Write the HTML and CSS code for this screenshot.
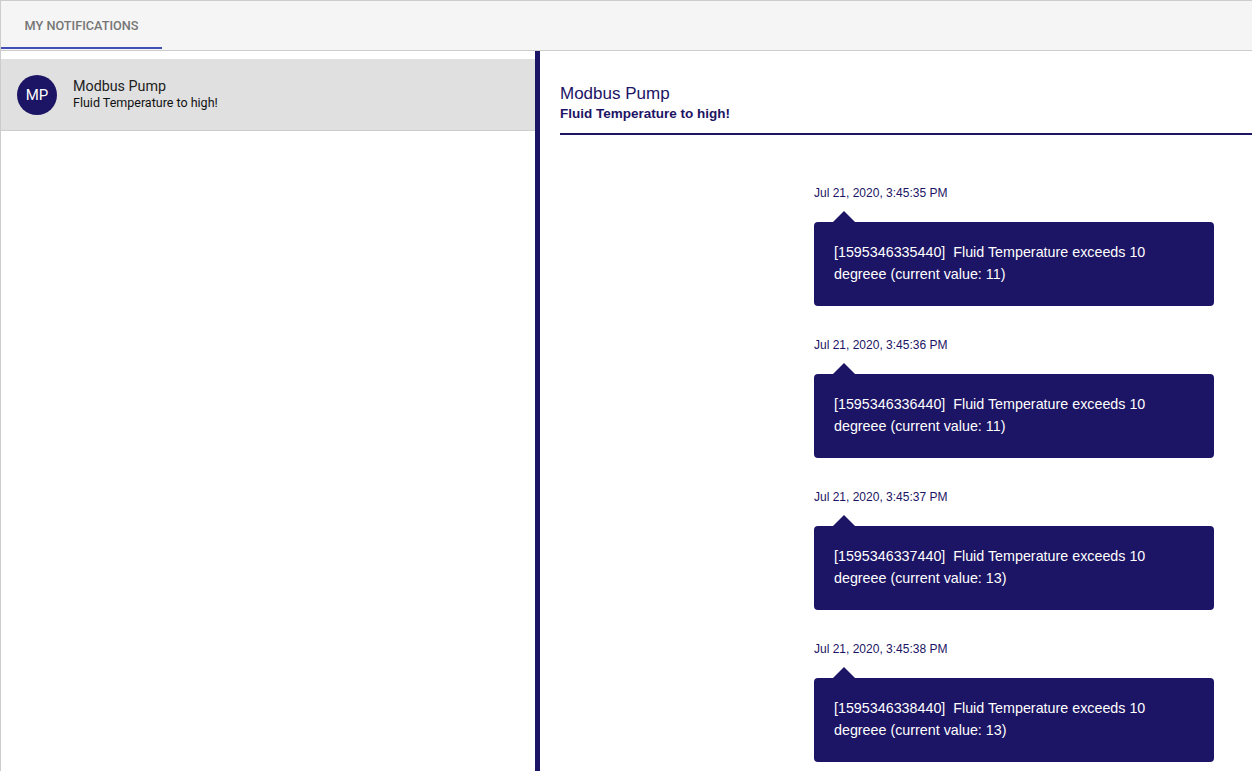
FILE: index.html
```html
<!DOCTYPE html>
<html lang="en">
<head>
<meta charset="utf-8">
<title>My Notifications</title>
<link rel="stylesheet" href="styles.css">
</head>
<body>
<div class="app">
  <header class="tabbar">
    <div class="tab active">MY NOTIFICATIONS</div>
  </header>
  <div class="main">
    <aside class="list">
      <div class="item selected">
        <div class="avatar">MP</div>
        <div class="item-text">
          <div class="item-title">Modbus Pump</div>
          <div class="item-sub">Fluid Temperature to high!</div>
        </div>
      </div>
    </aside>
    <section class="detail">
      <div class="detail-head">
        <div class="detail-title">Modbus Pump</div>
        <div class="detail-sub">Fluid Temperature to high!</div>
      </div>
      <div class="messages">
        <div class="msg">
          <div class="time">Jul 21, 2020, 3:45:35 PM</div>
          <div class="bubble">[1595346335440]&nbsp; Fluid Temperature exceeds 10 degreee (current value: 11)</div>
        </div>
        <div class="msg">
          <div class="time">Jul 21, 2020, 3:45:36 PM</div>
          <div class="bubble">[1595346336440]&nbsp; Fluid Temperature exceeds 10 degreee (current value: 11)</div>
        </div>
        <div class="msg">
          <div class="time">Jul 21, 2020, 3:45:37 PM</div>
          <div class="bubble">[1595346337440]&nbsp; Fluid Temperature exceeds 10 degreee (current value: 13)</div>
        </div>
        <div class="msg">
          <div class="time">Jul 21, 2020, 3:45:38 PM</div>
          <div class="bubble">[1595346338440]&nbsp; Fluid Temperature exceeds 10 degreee (current value: 13)</div>
        </div>
        <div class="msg">
          <div class="time">Jul 21, 2020, 3:45:39 PM</div>
          <div class="bubble">[1595346339440]&nbsp; Fluid Temperature exceeds 10 degreee (current value: 13)</div>
        </div>
      </div>
    </section>
  </div>
</div>
</body>
</html>
```

FILE: styles.css
```css
html, body {
  margin: 0;
  padding: 0;
  height: 100%;
  overflow: hidden;
  background: #ffffff;
}

.app {
  height: 100%;
  box-sizing: border-box;
  display: flex;
  flex-direction: column;
  border-top: 1px solid #cccccc;
  border-left: 1px solid #cccccc;
}

.tabbar {
  flex: 0 0 auto;
  height: 49px;
  background: #f5f5f5;
  border-bottom: 1px solid #cccccc;
  display: flex;
  align-items: stretch;
}

.tab {
  box-sizing: border-box;
  width: 161px;
  padding: 3px 0 0;
  display: flex;
  align-items: center;
  justify-content: center;
  font-family: Roboto, "Liberation Sans", sans-serif;
  font-weight: 500;
  font-size: 12.7px;
  color: #757575;
  border-bottom: 2px solid transparent;
  margin-bottom: 1px;
}

.tab.active {
  border-bottom-color: #3f51b5;
}

.main {
  flex: 1 1 auto;
  min-height: 0;
  display: flex;
}

.list {
  width: 534px;
  flex: 0 0 534px;
  padding-top: 8px;
}

.item {
  box-sizing: border-box;
  height: 72px;
  display: flex;
  align-items: center;
  padding-left: 16px;
  gap: 16px;
  border-bottom: 1px solid #cccccc;
}

.item.selected {
  background: #e0e0e0;
}

.avatar {
  width: 40px;
  height: 40px;
  border-radius: 50%;
  background: #1c1464;
  color: #ffffff;
  display: flex;
  align-items: center;
  justify-content: center;
  font-family: Roboto, "Liberation Sans", sans-serif;
  font-size: 15px;
  flex: 0 0 40px;
}

.item-text {
  font-family: Roboto, "Liberation Sans", sans-serif;
  display: flex;
  flex-direction: column;
  padding-bottom: 1px;
}

.item-title {
  font-size: 14.3px;
  line-height: 17px;
  color: #212121;
}

.item-sub {
  font-size: 12.5px;
  line-height: 15px;
  color: #111111;
}

.detail {
  flex: 1 1 auto;
  min-width: 0;
  border-left: 5px solid #1c1464;
  padding-left: 20px;
  overflow: hidden;
  font-family: "Liberation Sans", Arial, sans-serif;
}

.detail-head {
  padding-top: 33px;
  padding-bottom: 12px;
  border-bottom: 2px solid #1c1464;
  color: #1c1464;
}

.detail-title {
  font-size: 17px;
  line-height: 20px;
  margin-bottom: 2px;
}

.detail-sub {
  font-size: 13.5px;
  font-weight: bold;
  line-height: 15px;
}

.messages {
  padding-top: 51px;
  padding-left: 254px;
  display: flex;
  flex-direction: column;
  gap: 31.9px;
}

.msg {
  display: flex;
  flex-direction: column;
  align-items: flex-start;
}

.time {
  font-size: 12px;
  color: #1c1464;
  margin-bottom: 22px;
}

.bubble {
  position: relative;
  box-sizing: border-box;
  width: 400px;
  padding: 19px 20px 21px;
  background: #1c1464;
  color: #ffffff;
  border-radius: 4px;
  font-size: 14.3px;
  line-height: 22px;
}

.bubble::before {
  content: "";
  position: absolute;
  top: -11px;
  left: 19px;
  border-left: 11px solid transparent;
  border-right: 11px solid transparent;
  border-bottom: 11px solid #1c1464;
}
```
